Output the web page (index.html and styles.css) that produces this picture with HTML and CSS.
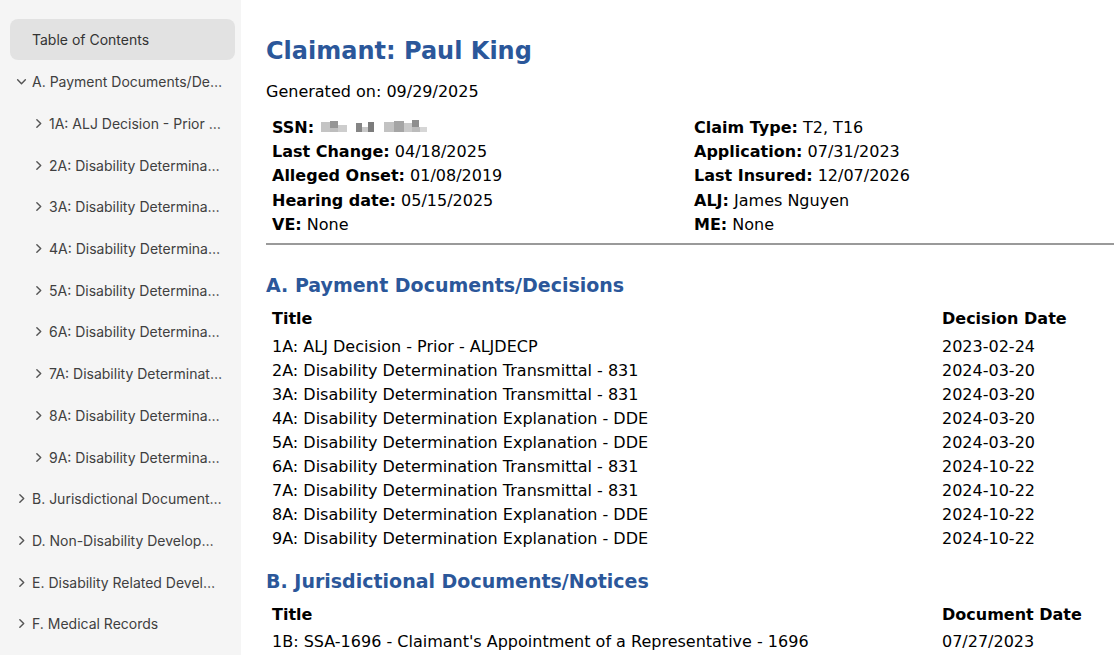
FILE: index.html
```html
<!DOCTYPE html>
<html lang="en">
<head>
<meta charset="utf-8">
<title>Claimant: Paul King</title>
<link rel="stylesheet" href="styles.css">
</head>
<body>
<aside class="sidebar">
  <div class="toc-title">Table of Contents</div>
  <ul class="toc">
    <li class="toc-item top"><svg class="chev" viewBox="0 0 10 10"><path d="M1.5 3.5 L5 7 L8.5 3.5"/></svg><span class="lbl">A. Payment Documents/Decisions</span></li>
    <li class="toc-item sub"><svg class="chev r" viewBox="0 0 10 10"><path d="M3.5 1.5 L7 5 L3.5 8.5"/></svg><span class="lbl">1A: ALJ Decision - Prior - ALJDECP</span></li>
    <li class="toc-item sub"><svg class="chev r" viewBox="0 0 10 10"><path d="M3.5 1.5 L7 5 L3.5 8.5"/></svg><span class="lbl">2A: Disability Determination Transmittal - 831</span></li>
    <li class="toc-item sub"><svg class="chev r" viewBox="0 0 10 10"><path d="M3.5 1.5 L7 5 L3.5 8.5"/></svg><span class="lbl">3A: Disability Determination Transmittal - 831</span></li>
    <li class="toc-item sub"><svg class="chev r" viewBox="0 0 10 10"><path d="M3.5 1.5 L7 5 L3.5 8.5"/></svg><span class="lbl">4A: Disability Determination Explanation - DDE</span></li>
    <li class="toc-item sub"><svg class="chev r" viewBox="0 0 10 10"><path d="M3.5 1.5 L7 5 L3.5 8.5"/></svg><span class="lbl">5A: Disability Determination Explanation - DDE</span></li>
    <li class="toc-item sub"><svg class="chev r" viewBox="0 0 10 10"><path d="M3.5 1.5 L7 5 L3.5 8.5"/></svg><span class="lbl">6A: Disability Determination Transmittal - 831</span></li>
    <li class="toc-item sub"><svg class="chev r" viewBox="0 0 10 10"><path d="M3.5 1.5 L7 5 L3.5 8.5"/></svg><span class="lbl">7A: Disability Determination Transmittal - 831</span></li>
    <li class="toc-item sub"><svg class="chev r" viewBox="0 0 10 10"><path d="M3.5 1.5 L7 5 L3.5 8.5"/></svg><span class="lbl">8A: Disability Determination Explanation - DDE</span></li>
    <li class="toc-item sub"><svg class="chev r" viewBox="0 0 10 10"><path d="M3.5 1.5 L7 5 L3.5 8.5"/></svg><span class="lbl">9A: Disability Determination Explanation - DDE</span></li>
    <li class="toc-item top"><svg class="chev r" viewBox="0 0 10 10"><path d="M3.5 1.5 L7 5 L3.5 8.5"/></svg><span class="lbl">B. Jurisdictional Documents/Notices</span></li>
    <li class="toc-item top"><svg class="chev r" viewBox="0 0 10 10"><path d="M3.5 1.5 L7 5 L3.5 8.5"/></svg><span class="lbl">D. Non-Disability Development</span></li>
    <li class="toc-item top"><svg class="chev r" viewBox="0 0 10 10"><path d="M3.5 1.5 L7 5 L3.5 8.5"/></svg><span class="lbl">E. Disability Related Development</span></li>
    <li class="toc-item top"><svg class="chev r" viewBox="0 0 10 10"><path d="M3.5 1.5 L7 5 L3.5 8.5"/></svg><span class="lbl">F. Medical Records</span></li>
  </ul>
</aside>
<main class="content">
  <h1 class="claimant">Claimant: Paul King</h1>
  <p class="generated">Generated on: 09/29/2025</p>
  <div class="info">
    <div class="info-col">
      <div class="info-row"><b>SSN:</b> <svg class="ssn" viewBox="0 0 108 16" width="108" height="16"><rect x="0" y="3" width="9" height="10" fill="#c4c4c4"/><rect x="9" y="2" width="8" height="7" fill="#959595"/><rect x="9" y="9" width="8" height="4" fill="#bdbdbd"/><rect x="17" y="6" width="9" height="7" fill="#cdcdcd"/><rect x="35" y="4" width="6" height="9" fill="#858585"/><rect x="41" y="8" width="6" height="5" fill="#c8c8c8"/><rect x="47" y="3" width="6" height="10" fill="#7c7c7c"/><rect x="63" y="3" width="10" height="10" fill="#c2c2c2"/><rect x="73" y="2" width="10" height="11" fill="#a5a5a5"/><rect x="83" y="4" width="8" height="9" fill="#cacaca"/><rect x="91" y="1" width="7" height="7" fill="#8e8e8e"/><rect x="91" y="8" width="8" height="5" fill="#bbbbbb"/><rect x="99" y="8" width="7" height="5" fill="#d6d6d6"/></svg></div>
      <div class="info-row"><b>Last Change:</b> 04/18/2025</div>
      <div class="info-row"><b>Alleged Onset:</b> 01/08/2019</div>
      <div class="info-row"><b>Hearing date:</b> 05/15/2025</div>
      <div class="info-row"><b>VE:</b> None</div>
    </div>
    <div class="info-col">
      <div class="info-row"><b>Claim Type:</b> T2, T16</div>
      <div class="info-row"><b>Application:</b> 07/31/2023</div>
      <div class="info-row"><b>Last Insured:</b> 12/07/2026</div>
      <div class="info-row"><b>ALJ:</b> James Nguyen</div>
      <div class="info-row"><b>ME:</b> None</div>
    </div>
  </div>
  <hr class="divider">
  <section class="section first">
    <h2 class="section-title">A. Payment Documents/Decisions</h2>
    <div class="doc-table">
      <div class="th">Title</div><div class="th">Decision Date</div>
      <div class="td">1A: ALJ Decision - Prior - ALJDECP</div><div class="td">2023-02-24</div>
      <div class="td">2A: Disability Determination Transmittal - 831</div><div class="td">2024-03-20</div>
      <div class="td">3A: Disability Determination Transmittal - 831</div><div class="td">2024-03-20</div>
      <div class="td">4A: Disability Determination Explanation - DDE</div><div class="td">2024-03-20</div>
      <div class="td">5A: Disability Determination Explanation - DDE</div><div class="td">2024-03-20</div>
      <div class="td">6A: Disability Determination Transmittal - 831</div><div class="td">2024-10-22</div>
      <div class="td">7A: Disability Determination Transmittal - 831</div><div class="td">2024-10-22</div>
      <div class="td">8A: Disability Determination Explanation - DDE</div><div class="td">2024-10-22</div>
      <div class="td">9A: Disability Determination Explanation - DDE</div><div class="td">2024-10-22</div>
    </div>
  </section>
  <section class="section second">
    <h2 class="section-title">B. Jurisdictional Documents/Notices</h2>
    <div class="doc-table">
      <div class="th">Title</div><div class="th">Document Date</div>
      <div class="td">1B: SSA-1696 - Claimant's Appointment of a Representative - 1696</div><div class="td">07/27/2023</div>
    </div>
  </section>
</main>
</body>
</html>
```

FILE: styles.css
```css
html, body {
  margin: 0;
  padding: 0;
  height: 100%;
  overflow: hidden;
  background: #ffffff;
}
body {
  display: flex;
  font-family: "DejaVu Sans", Verdana, sans-serif;
  color: #000;
}
.sidebar {
  width: 241px;
  flex: 0 0 241px;
  height: 655px;
  background: #f5f5f5;
  box-sizing: border-box;
  padding-top: 19px;
  font-family: Inter, "Noto Sans", sans-serif;
  font-size: 14px;
  color: #404040;
}
.toc-title {
  margin: 0 6px 0 10px;
  height: 41px;
  line-height: 41px;
  padding-left: 22px;
  background: #e2e2e2;
  border-radius: 8px;
  color: #333;
}
.toc {
  list-style: none;
  margin: 1px 0 0 0;
  padding: 0;
}
.toc-item {
  display: flex;
  align-items: center;
  height: 41.7px;
  padding-right: 18px;
  white-space: nowrap;
}
.toc-item.top { padding-left: 16px; }
.toc-item.sub { padding-left: 33px; }
.chev {
  width: 11px;
  height: 11px;
  flex: 0 0 11px;
  margin-right: 5px;
  fill: none;
  stroke: #555;
  stroke-width: 1.3;
  stroke-linecap: round;
  stroke-linejoin: round;
}
.lbl {
  overflow: hidden;
  text-overflow: ellipsis;
  min-width: 0;
}
.content {
  flex: 1;
  min-width: 0;
  padding: 37px 0 0 25px;
  box-sizing: border-box;
}
.claimant {
  margin: 0;
  font-size: 24px;
  line-height: 28.8px;
  font-weight: bold;
  color: #2b579a;
}
.generated {
  margin: 14px 0 0 0;
  font-size: 16px;
  line-height: 24px;
}
.info {
  display: grid;
  grid-template-columns: 422px 1fr;
  margin-top: 12px;
  font-size: 16px;
  line-height: 24.3px;
}
.info-row {
  padding-left: 6px;
  white-space: nowrap;
}
.ssn {
  vertical-align: -2px;
  margin-left: 2px;
}
.divider {
  border: none;
  border-top: 2px solid #9a9a9a;
  margin: 6px 0 0 0;
}
.section-title {
  margin: 0;
  font-size: 19px;
  line-height: 24px;
  font-weight: bold;
  color: #2b579a;
}
.first .section-title { margin-top: 28px; }
.second .section-title { margin-top: 18px; }
.doc-table {
  display: grid;
  grid-template-columns: 670px 1fr;
  font-size: 16px;
  line-height: 24px;
  margin-top: 10px;
}
.th {
  font-weight: bold;
  padding-left: 6px;
  margin-bottom: 4px;
}
.td {
  padding-left: 6px;
  white-space: nowrap;
}
.second .doc-table { margin-top: 10px; }
.second .th { margin-bottom: 3px; }
```
